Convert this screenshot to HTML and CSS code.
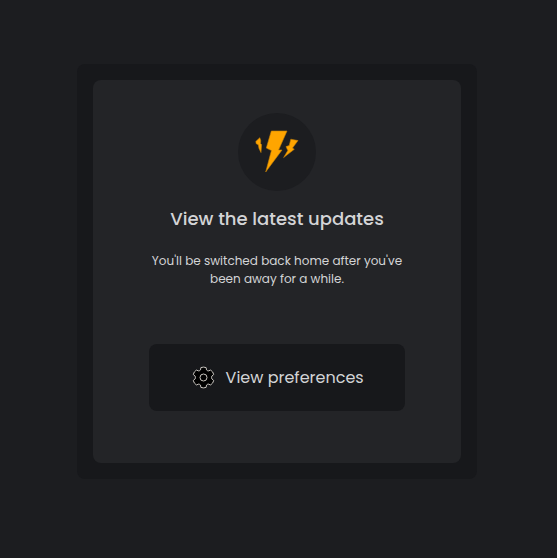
FILE: index.html
```html
<!DOCTYPE html>
<html lang="en">
<head>
<meta charset="utf-8">
<title>Updates</title>
<link rel="stylesheet" href="styles.css">
</head>
<body>
<main class="frame">
  <section class="card">
    <div class="badge">
      <svg viewBox="6 6 78 78" width="78" height="78" aria-hidden="true">
        <path d="M39.3 24H55L46.6 43H50L33.7 65L39.4 43.6L34.3 41Z"/>
        <path d="M58.8 32.2L66 33.6L60.5 41L62.3 42.3L51.6 50.6L55.8 43.5L54 39.6L57.2 38.6Z"/>
        <path d="M27.8 30.7L23.8 34.4L24.2 36.7L26.3 37.8L27 41.5L29 45.6L29.6 37.6L28.6 36.7L28.7 33.5Z"/>
      </svg>
    </div>
    <h1 class="title">View the latest updates</h1>
    <p class="copy">You'll be switched back home after you've<br>been away for a while.</p>
    <button class="button" type="button">
      <svg class="gear" viewBox="-.5 -.5 22 22" width="22" height="22" aria-hidden="true">
        <path d="M8.4 1.1Q11 .1 13.6 1.1L14 3.4Q14.7 4.3 15.8 4.4L18.2 3.6Q20.7 5.3 21.2 8L19.3 9.7Q18.8 11 19.3 12.3L21.2 14Q20.7 16.7 18.2 18.4L15.8 17.6Q14.7 17.7 14 18.6L13.6 20.9Q11 21.9 8.4 20.9L8 18.6Q7.3 17.7 6.2 17.6L3.8 18.4Q1.3 16.7 .8 14L2.7 12.3Q3.2 11 2.7 9.7L.8 8Q1.3 5.3 3.8 3.6L6.2 4.4Q7.3 4.3 8 3.4Z"/>
        <circle cx="11" cy="11" r="3.5"/>
      </svg>
      <span class="label">View preferences</span>
    </button>
  </section>
</main>
</body>
</html>
```
FILE: styles.css
```css
* { box-sizing: border-box; }

body {
  margin: 0;
  min-height: 558px;
  padding: 64px 0 0 77px;
  background: #1c1d20;
  color: #d3d4d6;
  font-family: Poppins, Inter, sans-serif;
}

.frame {
  width: 400px;
  height: 415px;
  padding: 16px;
  border-radius: 8px;
  background: #17181b;
}

.card {
  display: flex;
  flex-direction: column;
  align-items: center;
  height: 383px;
  padding-top: 33px;
  border-radius: 8px;
  background: #232427;
}

.badge {
  width: 78px;
  height: 78px;
  border-radius: 50%;
  background: #1c1d20;
}

.badge svg {
  display: block;
  fill: #ffa500;
  stroke: #c47f06;
  stroke-width: .6;
}

.title {
  margin: 14px 0 0;
  font-size: 18px;
  font-weight: 500;
  line-height: 27px;
  white-space: nowrap;
}

.copy {
  margin: 20px 0 0;
  font-size: 12px;
  line-height: 18px;
  text-align: center;
  white-space: nowrap;
}

.button {
  display: flex;
  align-items: center;
  width: 256px;
  height: 67px;
  margin-top: 56px;
  padding: 0 0 0 43px;
  gap: 11.6px;
  border: 0;
  border-radius: 8px;
  background: #17181b;
  color: inherit;
  font: 400 16px/24px Poppins, Inter, sans-serif;
  white-space: nowrap;
}

.gear {
  flex: none;
  margin-bottom: 1px;
  overflow: visible;
  fill: #000;
  stroke: #dcd8d2;
  stroke-width: .9;
}
```
